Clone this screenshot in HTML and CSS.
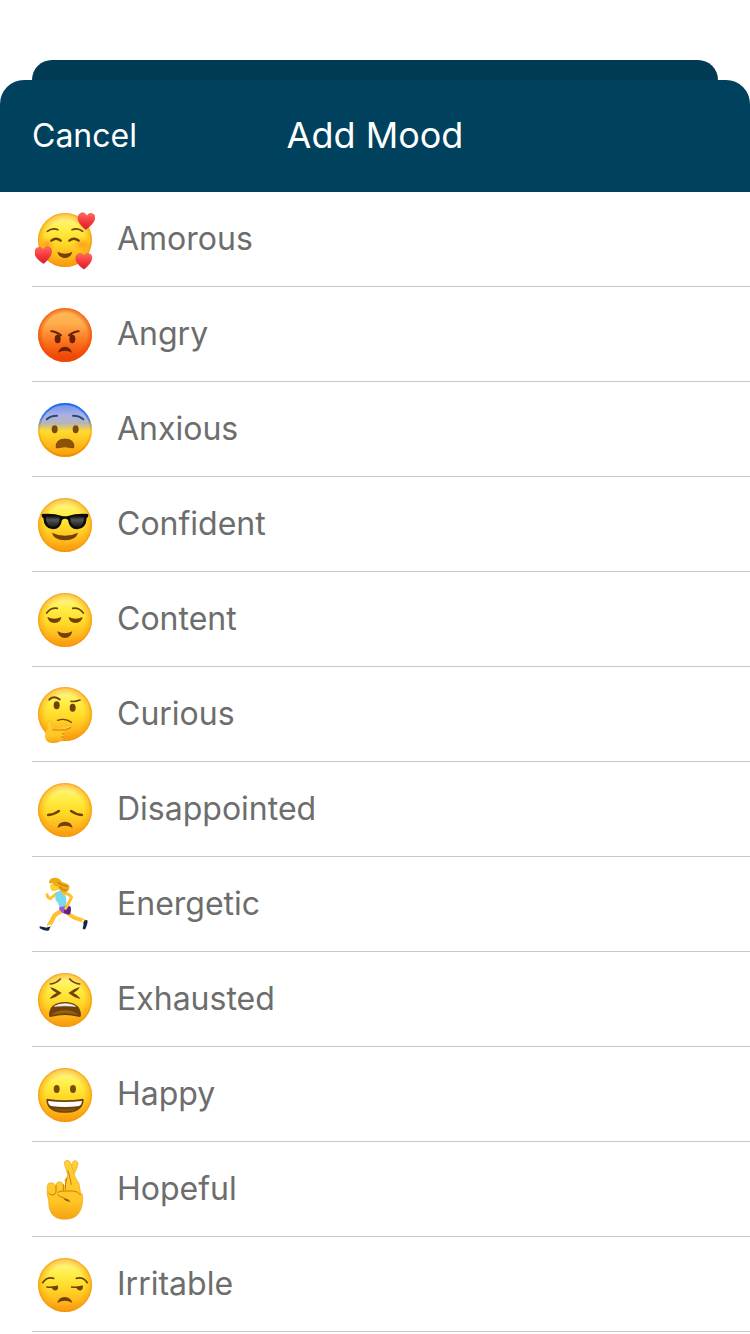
FILE: index.html
```html
<!DOCTYPE html>
<html lang="en">
<head>
    <meta charset="UTF-8">
    <meta name="viewport" content="width=device-width, initial-scale=1.0">
    <title>Add Mood</title>
    <link rel="stylesheet" href="styles.css">
</head>
<body>
    <!-- shared gradients and the plain yellow face -->
    <svg class="defs" width="0" height="0" aria-hidden="true">
        <defs>
            <linearGradient id="yellow" x1="0" y1="0" x2="0" y2="1">
                <stop offset="0" stop-color="#fff9a0"/>
                <stop offset="0.3" stop-color="#ffee45"/>
                <stop offset="0.55" stop-color="#ffd927"/>
                <stop offset="0.8" stop-color="#ffb81c"/>
                <stop offset="1" stop-color="#f9960c"/>
            </linearGradient>
            <radialGradient id="rim">
                <stop offset="0.7" stop-color="#f9a010" stop-opacity="0"/>
                <stop offset="0.92" stop-color="#f9a010" stop-opacity="0.5"/>
                <stop offset="1" stop-color="#f08c08" stop-opacity="0.85"/>
            </radialGradient>
            <linearGradient id="red" x1="0" y1="0" x2="0" y2="1">
                <stop offset="0" stop-color="#ffbd55"/>
                <stop offset="0.3" stop-color="#ffac4c"/>
                <stop offset="0.65" stop-color="#fb6f1b"/>
                <stop offset="1" stop-color="#e93a00"/>
            </linearGradient>
            <radialGradient id="redRim">
                <stop offset="0.8" stop-color="#ee4b08" stop-opacity="0"/>
                <stop offset="1" stop-color="#ee4b08" stop-opacity="0.8"/>
            </radialGradient>
            <linearGradient id="blue" x1="0" y1="0" x2="0" y2="1">
                <stop offset="0" stop-color="#6f8ce6"/>
                <stop offset="0.22" stop-color="#a8b1e8"/>
                <stop offset="0.38" stop-color="#b9b4b4"/>
                <stop offset="0.52" stop-color="#ffdc2c"/>
                <stop offset="0.75" stop-color="#ffbd1c"/>
                <stop offset="1" stop-color="#f99a0b"/>
            </linearGradient>
            <linearGradient id="blueRim" x1="0" y1="0" x2="0" y2="1">
                <stop offset="0" stop-color="#1c6df0"/>
                <stop offset="0.25" stop-color="#2f7df5"/>
                <stop offset="0.5" stop-color="#f5a70f" stop-opacity="0.5"/>
                <stop offset="1" stop-color="#ef8d06"/>
            </linearGradient>
            <radialGradient id="blush">
                <stop offset="0" stop-color="#ff7a1c" stop-opacity="0.65"/>
                <stop offset="1" stop-color="#ff9a1c" stop-opacity="0"/>
            </radialGradient>
            <linearGradient id="heartFill" x1="0" y1="0" x2="0" y2="1">
                <stop offset="0" stop-color="#ff6a61"/>
                <stop offset="0.5" stop-color="#f7383b"/>
                <stop offset="1" stop-color="#d3202b"/>
            </linearGradient>
            <linearGradient id="lens" x1="0" y1="0" x2="0" y2="1">
                <stop offset="0" stop-color="#111"/>
                <stop offset="0.35" stop-color="#555"/>
                <stop offset="1" stop-color="#1b1b1b"/>
            </linearGradient>
            <linearGradient id="skin" x1="0" y1="0" x2="0" y2="1">
                <stop offset="0" stop-color="#ffd13a"/>
                <stop offset="0.7" stop-color="#ffc524"/>
                <stop offset="1" stop-color="#f3a212"/>
            </linearGradient>
            <g id="face">
                <circle cx="120" cy="120" r="81" fill="url(#yellow)"/>
                <circle cx="120" cy="120" r="81" fill="url(#rim)"/>
            </g>
            <path id="heart" d="M0 26C-8 20-26 8-26-9C-26-18-19-24-12-24C-6-24-2-20 0-15C3-20 7-24 13-24C20-24 26-18 25-9C24 5 8 20 0 26Z" fill="url(#heartFill)" stroke="#d92a35" stroke-width="1"/>
        </defs>
    </svg>

    <div class="back-card"></div>
    <div class="sheet">
        <header>
            <button type="button" class="cancel">Cancel</button>
            <h1>Add Mood</h1>
        </header>

        <ul class="moods">
            <li>
                <button type="button" class="mood">
                    <svg class="icon" viewBox="30 30 180 180" aria-hidden="true">
                        <use href="#face"/>
                        <ellipse cx="172" cy="134" rx="28" ry="24" fill="url(#blush)"/>
                        <ellipse cx="66" cy="134" rx="26" ry="24" fill="url(#blush)"/>
                        <g fill="none" stroke="#70410a" stroke-width="6" stroke-linecap="round">
                            <path d="M67 94Q82 82 99 89M141 89Q158 82 173 94" stroke-width="5"/>
                            <path d="M79 122Q93 110 107 122M133 122Q147 110 161 122" stroke-width="7"/>
                        </g>
                        <path d="M97 155Q120 167 142 155Q138 173 120 174Q101 173 97 155Z" fill="#70410a"/>
                        <use href="#heart" transform="translate(184 63) rotate(4)"/>
                        <use href="#heart" transform="translate(55 165) rotate(-2)"/>
                        <use href="#heart" transform="translate(177 183) scale(.95)"/>
                    </svg>
                    <span>Amorous</span>
                </button>
            </li>
            <li>
                <button type="button" class="mood">
                    <svg class="icon" viewBox="30 30 180 180" aria-hidden="true">
                        <circle cx="120" cy="120" r="81" fill="url(#red)"/>
                        <circle cx="120" cy="120" r="81" fill="url(#redRim)"/>
                        <g fill="#672208">
                            <ellipse cx="98" cy="132" rx="9" ry="13"/>
                            <ellipse cx="142" cy="132" rx="9" ry="13"/>
                            <path d="M99 173Q104 155 120 155Q136 155 141 173Q120 162 99 173Z"/>
                        </g>
                        <path d="M79 109Q91 109 108 121M161 109Q149 109 132 121" fill="none" stroke="#672208" stroke-width="6" stroke-linecap="round"/>
                    </svg>
                    <span>Angry</span>
                </button>
            </li>
            <li>
                <button type="button" class="mood">
                    <svg class="icon" viewBox="30 30 180 180" aria-hidden="true">
                        <circle cx="120" cy="120" r="81" fill="url(#blue)"/>
                        <circle cx="120" cy="120" r="78" fill="none" stroke="url(#blueRim)" stroke-width="6"/>
                        <path d="M65 88Q76 77 96 77M144 77Q164 77 175 88" fill="none" stroke="#244a78" stroke-width="6" stroke-linecap="round"/>
                        <g fill="#7b4b0a">
                            <ellipse cx="89" cy="118" rx="9" ry="12"/>
                            <ellipse cx="152" cy="118" rx="9" ry="12"/>
                            <path d="M93 171Q93 147 120 147Q147 147 147 171Q146 176 138 173Q120 168 101 173Q94 176 93 171Z" fill="#8d5208" stroke="#6b3d05" stroke-width="2"/>
                        </g>
                    </svg>
                    <span>Anxious</span>
                </button>
            </li>
            <li>
                <button type="button" class="mood">
                    <svg class="icon" viewBox="30 30 180 180" aria-hidden="true">
                        <use href="#face"/>
                        <path d="M81 143Q120 162 159 143Q154 165 120 166Q86 165 81 143Z" fill="#70410a"/>
                        <path d="M50 87Q86 84 108 92Q120 95 132 92Q154 84 190 87L189 96L185 99Q184 131 157 133Q133 133 129 105Q120 98 111 105Q107 133 83 133Q57 131 55 99L51 96Z" fill="#0b0b0b"/>
                        <path d="M62 95Q85 90 104 97Q106 125 83 126Q64 126 62 95ZM136 97Q155 90 178 95Q176 126 157 126Q135 125 136 97Z" fill="url(#lens)"/>
                    </svg>
                    <span>Confident</span>
                </button>
            </li>
            <li>
                <button type="button" class="mood">
                    <svg class="icon" viewBox="30 30 180 180" aria-hidden="true">
                        <use href="#face"/>
                        <path d="M65 99Q78 82 97 85M143 85Q162 82 175 99" fill="none" stroke="#70410a" stroke-width="5" stroke-linecap="round"/>
                        <g fill="#70410a">
                            <path d="M67 111Q88 122 109 111Q108 128 88 129Q70 128 67 111ZM131 111Q152 122 173 111Q170 128 152 129Q132 128 131 111Z"/>
                            <path d="M97 154Q120 166 142 154Q138 173 120 174Q101 173 97 154Z"/>
                        </g>
                    </svg>
                    <span>Content</span>
                </button>
            </li>
            <li>
                <button type="button" class="mood">
                    <svg class="icon" viewBox="30 30 180 180" aria-hidden="true">
                        <g transform="translate(0 -3)">
                            <use href="#face"/>
                        </g>
                        <g fill="#70410a">
                            <ellipse cx="95" cy="91" rx="9" ry="12"/>
                            <ellipse cx="143" cy="98" rx="9" ry="12"/>
                        </g>
                        <g fill="none" stroke="#70410a" stroke-linecap="round">
                            <path d="M73 74Q84 60 104 73" stroke-width="6"/>
                            <path d="M138 79Q150 81 165 75" stroke-width="5"/>
                            <path d="M98 136Q121 128 139 142" stroke-width="4"/>
                        </g>
                        <path d="M69 139Q74 134 79 141Q82 151 82 162L129 151Q138 150 138 157Q137 162 119 167Q124 172 117 176Q121 182 115 185Q119 195 108 198Q91 207 72 202Q59 196 61 180Q61 169 67 161Q66 147 69 139Z" fill="url(#skin)" stroke="#f0a01a" stroke-width="1"/>
                        <path d="M84 165L119 165L137 158M112 176H117M110 186H115" fill="none" stroke="#d9780a" stroke-width="3" stroke-linecap="round"/>
                    </svg>
                    <span>Curious</span>
                </button>
            </li>
            <li>
                <button type="button" class="mood">
                    <svg class="icon" viewBox="30 30 180 180" aria-hidden="true">
                        <use href="#face"/>
                        <path d="M69 135Q89 133 102 123M171 135Q151 133 138 123" fill="none" stroke="#70410a" stroke-width="7" stroke-linecap="round"/>
                        <path d="M97 174Q101 155 120 155Q139 155 143 174Q120 160 97 174Z" fill="#70410a"/>
                    </svg>
                    <span>Disappointed</span>
                </button>
            </li>
            <li>
                <button type="button" class="mood">
                    <svg class="icon" viewBox="30 30 180 180" aria-hidden="true">
                        <g fill="none" stroke-linejoin="round" stroke-linecap="round">
                            <path d="M66 89Q68 99 76 101L94 86" stroke="#ffc329" stroke-width="9"/>
                            <path d="M114 136Q99 143 88 152Q82 167 72 181" stroke="#ffc329" stroke-width="13"/>
                            <path d="M127 143Q143 157 154 160L175 167" stroke="#ffc329" stroke-width="12"/>
                        </g>
                        <path d="M44 184L66 188Q70 181 77 183L72 196Q65 201 44 190Z" fill="#16254f"/>
                        <path d="M175 170Q180 163 187 166Q190 173 181 192Q175 195 173 190Q177 180 175 170Z" fill="#16254f"/>
                        <path d="M67 184L78 181M174 164V172" stroke="#fff" stroke-width="5"/>
                        <path d="M105 122L135 122Q141 138 128 149Q111 147 102 132Z" fill="#a451df"/>
                        <path d="M119 124L137 125Q140 140 133 149L117 143Z" fill="#5a238c"/>
                        <path d="M91 84Q105 72 117 84Q128 101 122 124L103 126Q101 112 91 104Z" fill="#76d9ef"/>
                        <path d="M115 85Q132 86 140 97L128 119L122 130" fill="none" stroke="#ffc329" stroke-width="9" stroke-linejoin="round" stroke-linecap="round"/>
                        <path d="M76 58Q74 70 80 77Q94 80 103 72L101 55Z" fill="#ffcf32"/>
                        <path d="M72 55Q70 40 89 38Q104 38 111 51Q124 53 132 61Q136 71 128 79Q125 86 114 82Q100 78 99 64Q86 64 83 55Z" fill="#ecaa17"/>
                        <path d="M98 52Q111 63 129 64M104 65Q114 77 126 76" fill="none" stroke="#b9770c" stroke-width="3"/>
                    </svg>
                    <span>Energetic</span>
                </button>
            </li>
            <li>
                <button type="button" class="mood">
                    <svg class="icon" viewBox="30 30 180 180" aria-hidden="true">
                        <use href="#face"/>
                        <path d="M76 72Q94 70 106 57M164 72Q146 70 134 57" fill="none" stroke="#70410a" stroke-width="5" stroke-linecap="round"/>
                        <path d="M76 81Q92 85 110 99Q94 112 75 117Q76 109 95 99Q77 89 76 81ZM164 81Q148 85 130 99Q146 112 165 117Q164 109 145 99Q163 89 164 81Z" fill="#70410a"/>
                        <path d="M72 165Q73 127 120 126Q167 127 168 165Q168 173 160 170Q120 160 80 170Q72 173 72 165Z" fill="#70410a"/>
                        <path d="M88 139Q100 131 120 131Q140 131 152 139Q120 136 88 139Z" fill="#fff" stroke="#e4e7ef" stroke-width="2"/>
                        <path d="M79 165Q92 151 120 151Q148 151 161 165Q120 155 79 165Z" fill="#96600d"/>
                    </svg>
                    <span>Exhausted</span>
                </button>
            </li>
            <li>
                <button type="button" class="mood">
                    <svg class="icon" viewBox="30 30 180 180" aria-hidden="true">
                        <use href="#face"/>
                        <ellipse cx="95" cy="102" rx="9" ry="12" fill="#7b4b0a"/>
                        <ellipse cx="144" cy="102" rx="9" ry="12" fill="#7b4b0a"/>
                        <path d="M64 136Q63 130 70 132Q120 140 170 132Q177 130 176 136Q173 173 120 173Q67 173 64 136Z" fill="#70410a"/>
                        <path d="M64 136Q70 173 120 173Q170 173 176 136Q172 174 120 174Q68 174 64 136Z" fill="#70410a"/>
                        <path d="M69 138Q120 144 171 138Q170 150 162 153Q120 159 78 153Q70 150 69 138Z" fill="#fff"/>
                        <path d="M84 160Q120 165 156 160Q142 170 120 170Q98 170 84 160Z" fill="#8b540a"/>
                    </svg>
                    <span>Happy</span>
                </button>
            </li>
            <li>
                <button type="button" class="mood">
                    <svg class="icon" viewBox="30 30 180 180" aria-hidden="true">
                        <g fill="url(#skin)" stroke="#eba41a" stroke-width="2">
                            <path d="M137 63Q140 38 146 33Q156 30 159 40Q158 54 147 72L125 98L119 92Z"/>
                            <path d="M118 41Q117 33 126 31Q135 31 138 42L147 72Q154 90 162 101L166 126Q174 130 173 151Q171 180 157 195Q143 208 118 208Q91 207 80 191Q70 176 71 151Q64 133 67 108Q68 98 79 98Q89 99 93 107Q94 95 104 95Q113 96 115 104L120 111Q121 94 129 76Z"/>
                        </g>
                        <g fill="none" stroke="#cc7d09" stroke-width="3" stroke-linecap="round">
                            <path d="M93 107V126Q91 136 81 135Q74 134 71 129M115 104V122"/>
                            <path d="M129 63Q136 86 139 103M125 86Q120 103 121 118"/>
                            <path d="M98 128Q102 123 113 123H146Q158 124 166 134"/>
                            <path d="M98 135Q108 143 118 144"/>
                        </g>
                        <path d="M115 146Q127 143 137 155Q123 155 115 146Z" fill="#93540a"/>
                    </svg>
                    <span>Hopeful</span>
                </button>
            </li>
            <li>
                <button type="button" class="mood">
                    <svg class="icon" viewBox="30 30 180 180" aria-hidden="true">
                        <use href="#face"/>
                        <path d="M53 113Q66 94 86 100M187 113Q174 94 154 100" fill="none" stroke="#70410a" stroke-width="5" stroke-linecap="round"/>
                        <path d="M66 126Q82 128 97 124M140 126Q156 128 172 124" fill="none" stroke="#70410a" stroke-width="5" stroke-linecap="round"/>
                        <g fill="#70410a">
                            <path d="M77 126L98 123Q102 132 94 136Q85 138 77 126ZM152 127L172 123Q176 131 168 136Q159 138 152 127Z"/>
                            <path d="M97 174Q101 156 119 156Q138 157 142 174Q120 161 97 174Z"/>
                        </g>
                    </svg>
                    <span>Irritable</span>
                </button>
            </li>
        </ul>
    </div>
</body>
</html>
```
FILE: styles.css
```css
body {
    font-family: Inter, "Liberation Sans", sans-serif;
    margin: 0;
    padding-top: 60px;
    background-color: #fff;
}
.defs {
    position: absolute;
}
button {
    font-family: inherit;
    background: none;
    border: none;
    padding: 0;
    cursor: pointer;
}
.back-card {
    height: 20px;
    margin: 0 32px;
    background-color: #003a53;
    border-radius: 20px 20px 0 0;
}
header {
    display: grid;
    grid-template-columns: 1fr auto 1fr;
    align-items: center;
    height: 112px;
    padding: 0 32px;
    box-sizing: border-box;
    background-color: #00415d;
    border-radius: 24px 24px 0 0;
    color: white;
}
.cancel {
    justify-self: start;
    color: white;
    font-size: 32px;
    line-height: 40px;
}
h1 {
    margin: 0;
    padding-bottom: 2px;
    font-size: 36px;
    font-weight: 400;
    line-height: 44px;
}
.moods {
    list-style: none;
    margin: 0;
    padding: 0 0 0 32px;
}
.moods li {
    border-bottom: 1px solid #c6c6c8;
}
.mood {
    display: flex;
    align-items: center;
    gap: 22px;
    width: 100%;
    padding: 18px 3px 16px;
    color: #6d6d6d;
    font-size: 32px;
    line-height: 40px;
    text-align: left;
}
.mood span {
    padding-bottom: 2px;
}
.icon {
    width: 60px;
    height: 60px;
    flex-shrink: 0;
}
```
